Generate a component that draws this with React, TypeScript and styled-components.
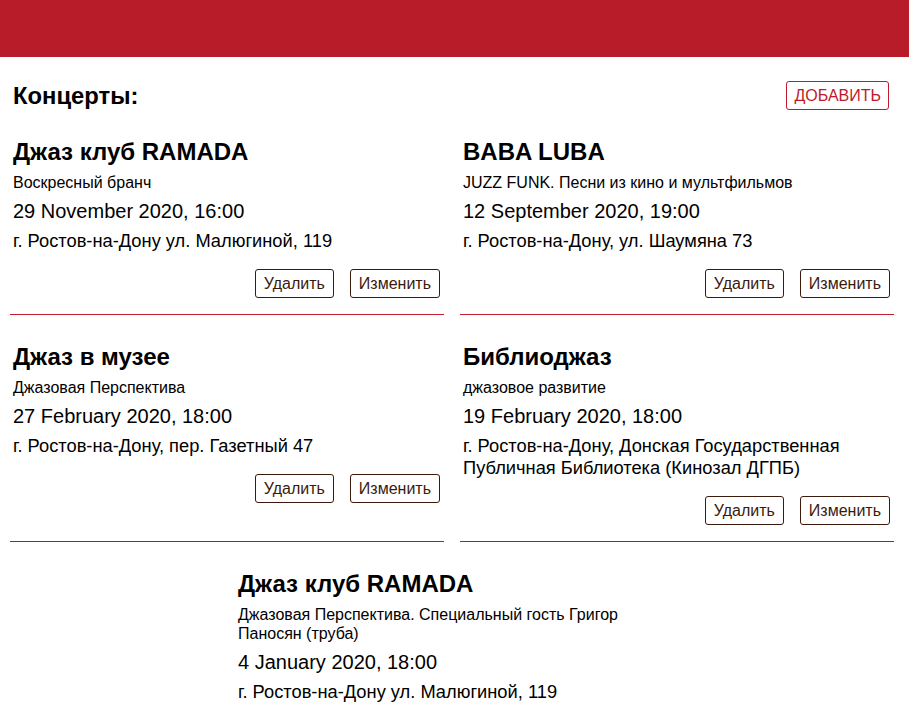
import React from "react";
import styled, { createGlobalStyle } from "styled-components";

const GlobalStyle = createGlobalStyle`
  html, body { margin: 0; padding: 0; background: #ffffff; }
  body { font-family: "Liberation Sans", Arial, Helvetica, sans-serif; color: #000; }
`;

const TopBar = styled.header`
  height: 57px;
  background: #b81c29;
`;

const Main = styled.main`
  width: 884px;
  margin: 0 0 0 10px;
  padding-top: 24px;
`;

const HeadRow = styled.div`
  display: flex;
  align-items: center;
  justify-content: space-between;
  padding: 0 5px 0 3px;
  margin-bottom: 27px;
`;

const PageTitle = styled.h1`
  margin: 0;
  font-size: 23.8px;
  font-weight: 700;
`;

const AddButton = styled.button`
  font-family: inherit;
  font-size: 16px;
  height: 29px;
  padding: 0 7px;
  background: #fff;
  color: #c0192b;
  border: 1px solid #c0192b;
  border-radius: 3px;
`;

const Grid = styled.div`
  display: flex;
  flex-wrap: wrap;
  justify-content: center;
  column-gap: 16px;
  row-gap: 27px;
`;

const Card = styled.article<{ $line: string }>`
  width: 434px;
  box-sizing: border-box;
  padding: 0 4px 16px 3px;
  border-bottom: 1px solid ${(p) => p.$line};
`;

const Title = styled.h2`
  margin: 0 0 6px;
  font-size: 24px;
  line-height: 30px;
  font-weight: 700;
`;

const Subtitle = styled.div`
  font-size: 16px;
  line-height: 19px;
  margin-bottom: 7px;
`;

const DateLine = styled.div`
  font-size: 20px;
  line-height: 25px;
  margin-bottom: 6px;
`;

const Address = styled.div`
  font-size: 18.3px;
  line-height: 22px;
`;

const Actions = styled.div`
  display: flex;
  justify-content: flex-end;
  gap: 16px;
  margin-top: 17px;
`;

const ActionButton = styled.button`
  font-family: inherit;
  font-size: 16px;
  height: 29px;
  padding: 0 8px;
  background: #fff;
  color: #3b1a0c;
  border: 1px solid #3b1a0c;
  border-radius: 3px;
`;

type Concert = {
  title: string;
  subtitle: string;
  date: string;
  address: string;
  line: string;
};

const concerts: Concert[] = [
  {
    title: "Джаз клуб RAMADA",
    subtitle: "Воскресный бранч",
    date: "29 November 2020, 16:00",
    address: "г. Ростов-на-Дону ул. Малюгиной, 119",
    line: "#c41d30",
  },
  {
    title: "BABA LUBA",
    subtitle: "JUZZ FUNK. Песни из кино и мультфильмов",
    date: "12 September 2020, 19:00",
    address: "г. Ростов-на-Дону, ул. Шаумяна 73",
    line: "#c41d30",
  },
  {
    title: "Джаз в музее",
    subtitle: "Джазовая Перспектива",
    date: "27 February 2020, 18:00",
    address: "г. Ростов-на-Дону, пер. Газетный 47",
    line: "#8e2a34",
  },
  {
    title: "Библиоджаз",
    subtitle: "джазовое развитие",
    date: "19 February 2020, 18:00",
    address: "г. Ростов-на-Дону, Донская Государственная Публичная Библиотека (Кинозал ДГПБ)",
    line: "#8e2a34",
  },
  {
    title: "Джаз клуб RAMADA",
    subtitle: "Джазовая Перспектива. Специальный гость Григор Паносян (труба)",
    date: "4 January 2020, 18:00",
    address: "г. Ростов-на-Дону ул. Малюгиной, 119",
    line: "#8e2a34",
  },
];

export default function App() {
  return (
    <>
      <GlobalStyle />
      <TopBar />
      <Main>
        <HeadRow>
          <PageTitle>Концерты:</PageTitle>
          <AddButton>ДОБАВИТЬ</AddButton>
        </HeadRow>
        <Grid>
          {concerts.map((c, i) => (
            <Card key={i} $line={c.line}>
              <Title>{c.title}</Title>
              <Subtitle>{c.subtitle}</Subtitle>
              <DateLine>{c.date}</DateLine>
              <Address>{c.address}</Address>
              <Actions>
                <ActionButton>Удалить</ActionButton>
                <ActionButton>Изменить</ActionButton>
              </Actions>
            </Card>
          ))}
        </Grid>
      </Main>
    </>
  );
}
